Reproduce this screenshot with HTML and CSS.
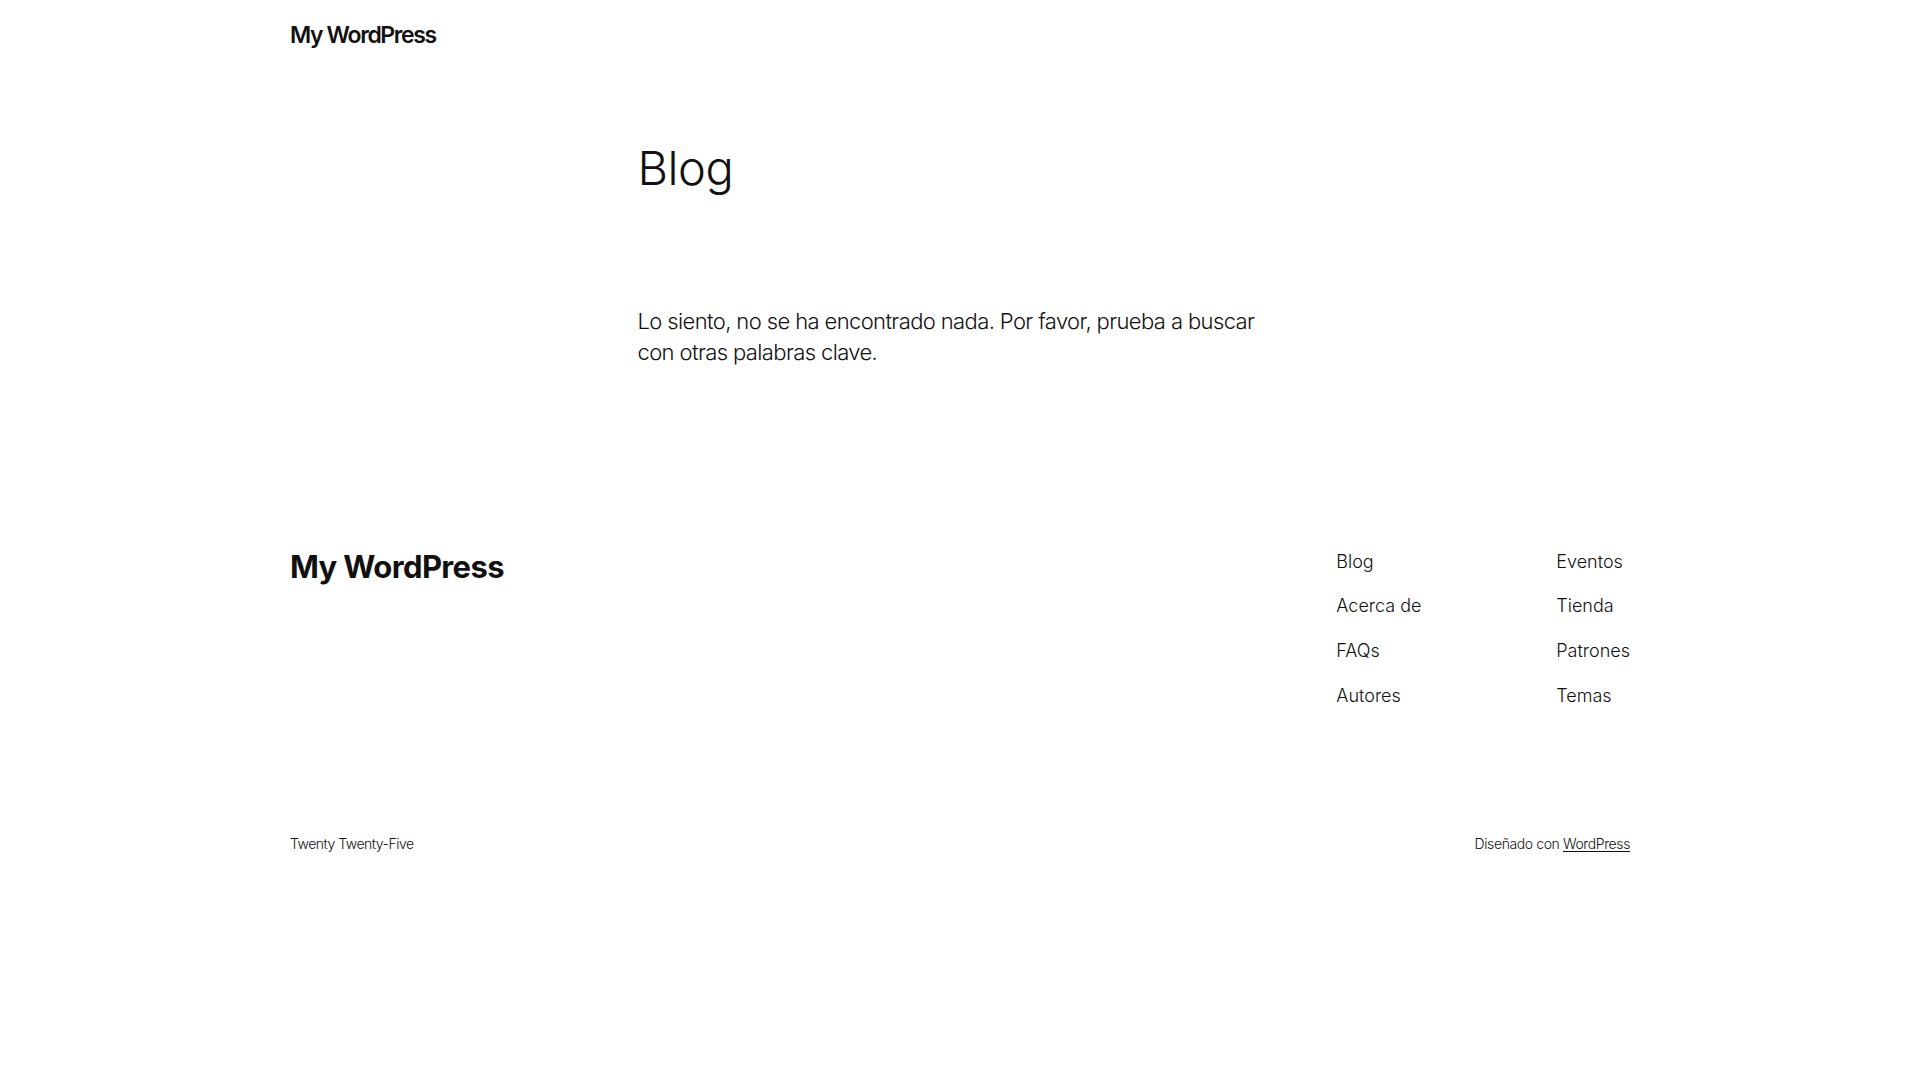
FILE: index.html
```html
<!DOCTYPE html>
<html lang="es">
<head>
<meta charset="utf-8">
<title>Blog – My WordPress</title>
<link rel="stylesheet" href="styles.css">
</head>
<body>
<header class="site-header">
  <div class="wide">
    <a class="site-title" href="#">My WordPress</a>
  </div>
</header>
<main class="site-main">
  <div class="content">
    <h1 class="page-title">Blog</h1>
    <p class="not-found">Lo siento, no se ha encontrado nada. Por favor, prueba a buscar con otras palabras clave.</p>
  </div>
</main>
<footer class="site-footer">
  <div class="wide footer-top">
    <a class="footer-title" href="#">My WordPress</a>
    <nav class="footer-nav">
      <ul class="nav-col">
        <li><a href="#">Blog</a></li>
        <li><a href="#">Acerca de</a></li>
        <li><a href="#">FAQs</a></li>
        <li><a href="#">Autores</a></li>
      </ul>
      <ul class="nav-col">
        <li><a href="#">Eventos</a></li>
        <li><a href="#">Tienda</a></li>
        <li><a href="#">Patrones</a></li>
        <li><a href="#">Temas</a></li>
      </ul>
    </nav>
  </div>
  <div class="wide footer-bottom">
    <p class="theme-name">Twenty Twenty-Five</p>
    <p class="credit">Diseñado con <a href="#">WordPress</a></p>
  </div>
</footer>
</body>
</html>
```

FILE: styles.css
```css
* { box-sizing: border-box; }

html, body {
  margin: 0;
  padding: 0;
  background: #ffffff;
}

body {
  font-family: Inter, "Noto Sans", "Liberation Sans", sans-serif;
  color: #111111;
  -webkit-font-smoothing: antialiased;
}

a {
  color: inherit;
  text-decoration: none;
}

.wide {
  width: 1340px;
  margin: 0 auto;
}

.content {
  width: 645px;
  margin: 0 auto;
}

/* Header */
.site-header {
  padding-top: 19px;
}

.site-title {
  display: block;
  font-size: 23px;
  font-weight: 600;
  line-height: 1.4;
  letter-spacing: -0.06em;
}

/* Main */
.site-main {
  padding-top: 91px;
}

.page-title {
  margin: 0;
  font-size: 47px;
  font-weight: 300;
  line-height: 1.125;
  letter-spacing: -0.01em;
}

.not-found {
  margin: 111px 0 0;
  font-size: 22px;
  font-weight: 300;
  line-height: 1.4;
  letter-spacing: -0.028em;
}

/* Footer */
.site-footer {
  padding-top: 180px;
}

.footer-top {
  display: flex;
  justify-content: space-between;
  align-items: flex-start;
}

.footer-title {
  font-size: 31px;
  font-weight: 700;
  line-height: 1.2;
  letter-spacing: -0.02em;
}

.footer-nav {
  display: flex;
  margin-top: 1px;
}

.nav-col {
  list-style: none;
  margin: 0;
  padding: 0;
  display: flex;
  flex-direction: column;
  gap: 19.5px;
  font-size: 18px;
  font-weight: 300;
  line-height: 1.4;
  letter-spacing: 0;
}

.nav-col:first-child {
  width: 220px;
}

.footer-bottom {
  display: flex;
  justify-content: space-between;
  align-items: flex-start;
  padding-top: 126px;
  padding-bottom: 40px;
}

.theme-name,
.credit {
  margin: 0;
  font-size: 14px;
  font-weight: 300;
  line-height: 1.4;
  letter-spacing: -0.035em;
}

.credit {
  letter-spacing: -0.028em;
}

.credit a {
  text-decoration: underline;
  text-underline-offset: 2px;
  text-decoration-thickness: 1px;
}
```
